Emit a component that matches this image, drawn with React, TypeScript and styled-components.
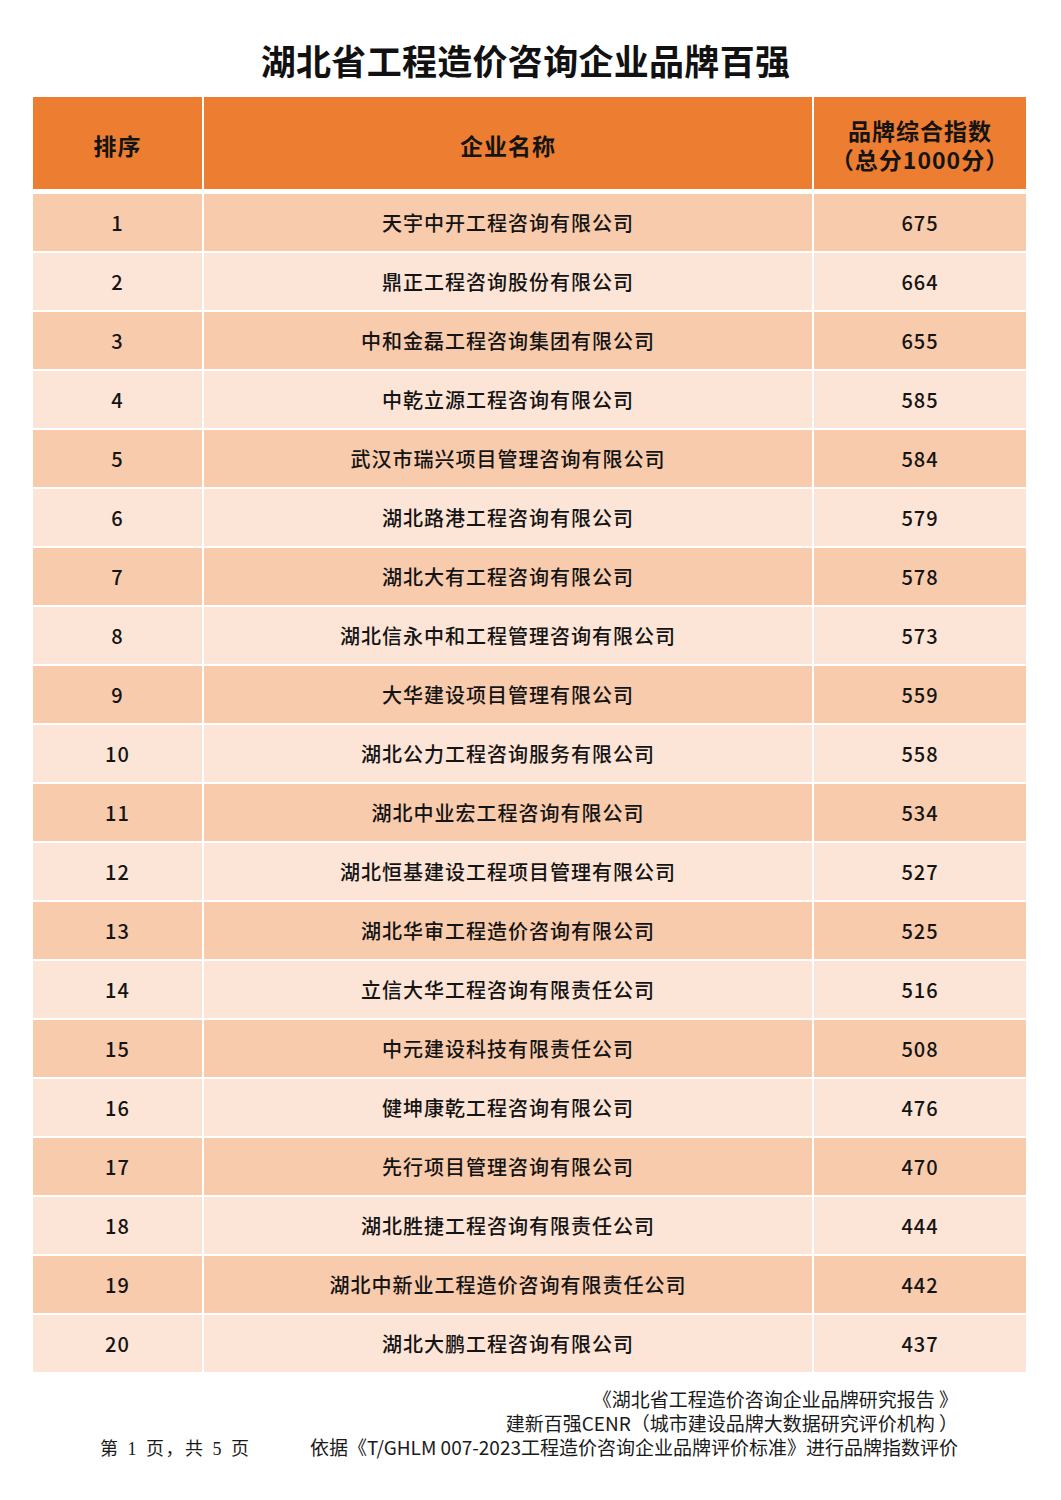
import { FC } from "react";
import styled, { createGlobalStyle } from "styled-components";

/** Ranking rows: name and brand index */
const COMPANIES: [string, number][] = [
  ["天宇中开工程咨询有限公司", 675],
  ["鼎正工程咨询股份有限公司", 664],
  ["中和金磊工程咨询集团有限公司", 655],
  ["中乾立源工程咨询有限公司", 585],
  ["武汉市瑞兴项目管理咨询有限公司", 584],
  ["湖北路港工程咨询有限公司", 579],
  ["湖北大有工程咨询有限公司", 578],
  ["湖北信永中和工程管理咨询有限公司", 573],
  ["大华建设项目管理有限公司", 559],
  ["湖北公力工程咨询服务有限公司", 558],
  ["湖北中业宏工程咨询有限公司", 534],
  ["湖北恒基建设工程项目管理有限公司", 527],
  ["湖北华审工程造价咨询有限公司", 525],
  ["立信大华工程咨询有限责任公司", 516],
  ["中元建设科技有限责任公司", 508],
  ["健坤康乾工程咨询有限公司", 476],
  ["先行项目管理咨询有限公司", 470],
  ["湖北胜捷工程咨询有限责任公司", 444],
  ["湖北中新业工程造价咨询有限责任公司", 442],
  ["湖北大鹏工程咨询有限公司", 437],
];

const SANS = `"Noto Sans CJK SC", "Noto Sans", sans-serif`;

const GlobalStyle = createGlobalStyle`
  body {
    margin: 0;
    background: #ffffff;
    font-family: ${SANS};
    color: #111111;
  }
`;

const App = () => (
  <Page>
    <GlobalStyle />
    <Title>湖北省工程造价咨询企业品牌百强</Title>
    <Table>
      <HeadCell>排序</HeadCell>
      <HeadCell>企业名称</HeadCell>
      <HeadCell>
        <HeadLine>品牌综合指数</HeadLine>
        <HeadLine>（总分1000分）</HeadLine>
      </HeadCell>
      {COMPANIES.map(([name, score], i) => (
        <RankRow key={name} rank={i + 1} name={name} score={score} />
      ))}
    </Table>
    <Footer>
      <FooterLine>《湖北省工程造价咨询企业品牌研究报告 》</FooterLine>
      <FooterLine>建新百强CENR（城市建设品牌大数据研究评价机构 ）</FooterLine>
      <FooterLast>
        <PageNo>第 1 页，共 5 页</PageNo>
        <span>依据《T/GHLM 007-2023工程造价咨询企业品牌评价标准》进行品牌指数评价</span>
      </FooterLast>
    </Footer>
  </Page>
);

interface RankRowProps {
  rank: number;
  name: string;
  score: number;
}

const RankRow: FC<RankRowProps> = ({ rank, name, score }) => {
  const odd = rank % 2 === 1;
  return (
    <>
      <BodyCell $odd={odd}>{rank}</BodyCell>
      <BodyCell $odd={odd}>{name}</BodyCell>
      <BodyCell $odd={odd}>{score}</BodyCell>
    </>
  );
};

const Page = styled.div`
  width: 1061px;
  padding-top: 36px;
  padding-bottom: 40px;
`;

const Title = styled.h1`
  margin: 0;
  padding-right: 10px;
  text-align: center;
  font-size: 35px;
  line-height: 48px;
  font-weight: 700;
  letter-spacing: 0.3px;
  color: #111111;
`;

const Table = styled.div`
  margin: 13px 35px 0 33px;
  display: grid;
  grid-template-columns: 169px 608px 212px;
  grid-template-rows: 95px;
  grid-auto-rows: 57px;
  gap: 2px;
`;

const HeadCell = styled.div`
  align-self: start;
  box-sizing: border-box;
  height: 92px;
  padding-top: 4px;
  background: #ed7d31;
  display: flex;
  flex-direction: column;
  align-items: center;
  justify-content: center;
  text-align: center;
  font-size: 23px;
  line-height: 30px;
  font-weight: 700;
  letter-spacing: 1px;
  color: #141414;
`;

const HeadLine = styled.div`
  height: 29px;
  line-height: 29px;
`;

const BodyCell = styled.div<{ $odd: boolean }>`
  background: ${({ $odd }) => ($odd ? "#f8cbad" : "#fce4d6")};
  display: flex;
  align-items: center;
  justify-content: center;
  font-size: 20px;
  font-weight: 500;
  letter-spacing: 1px;
  color: #141414;
`;

const Footer = styled.div`
  margin-top: 15px;
  padding: 0 103px 0 100px;
  display: flex;
  flex-direction: column;
  align-items: flex-end;
  font-size: 19px;
  line-height: 24px;
  color: #1a1a1a;
`;

const FooterLine = styled.div`
  text-align: right;
`;

const FooterLast = styled.div`
  align-self: stretch;
  display: flex;
  justify-content: space-between;
  align-items: baseline;
`;

const PageNo = styled.span`
  font-family: "Liberation Serif", "Noto Sans CJK SC", serif;
  font-size: 18px;
  letter-spacing: 1.5px;
  word-spacing: 2px;
`;

export default App;
